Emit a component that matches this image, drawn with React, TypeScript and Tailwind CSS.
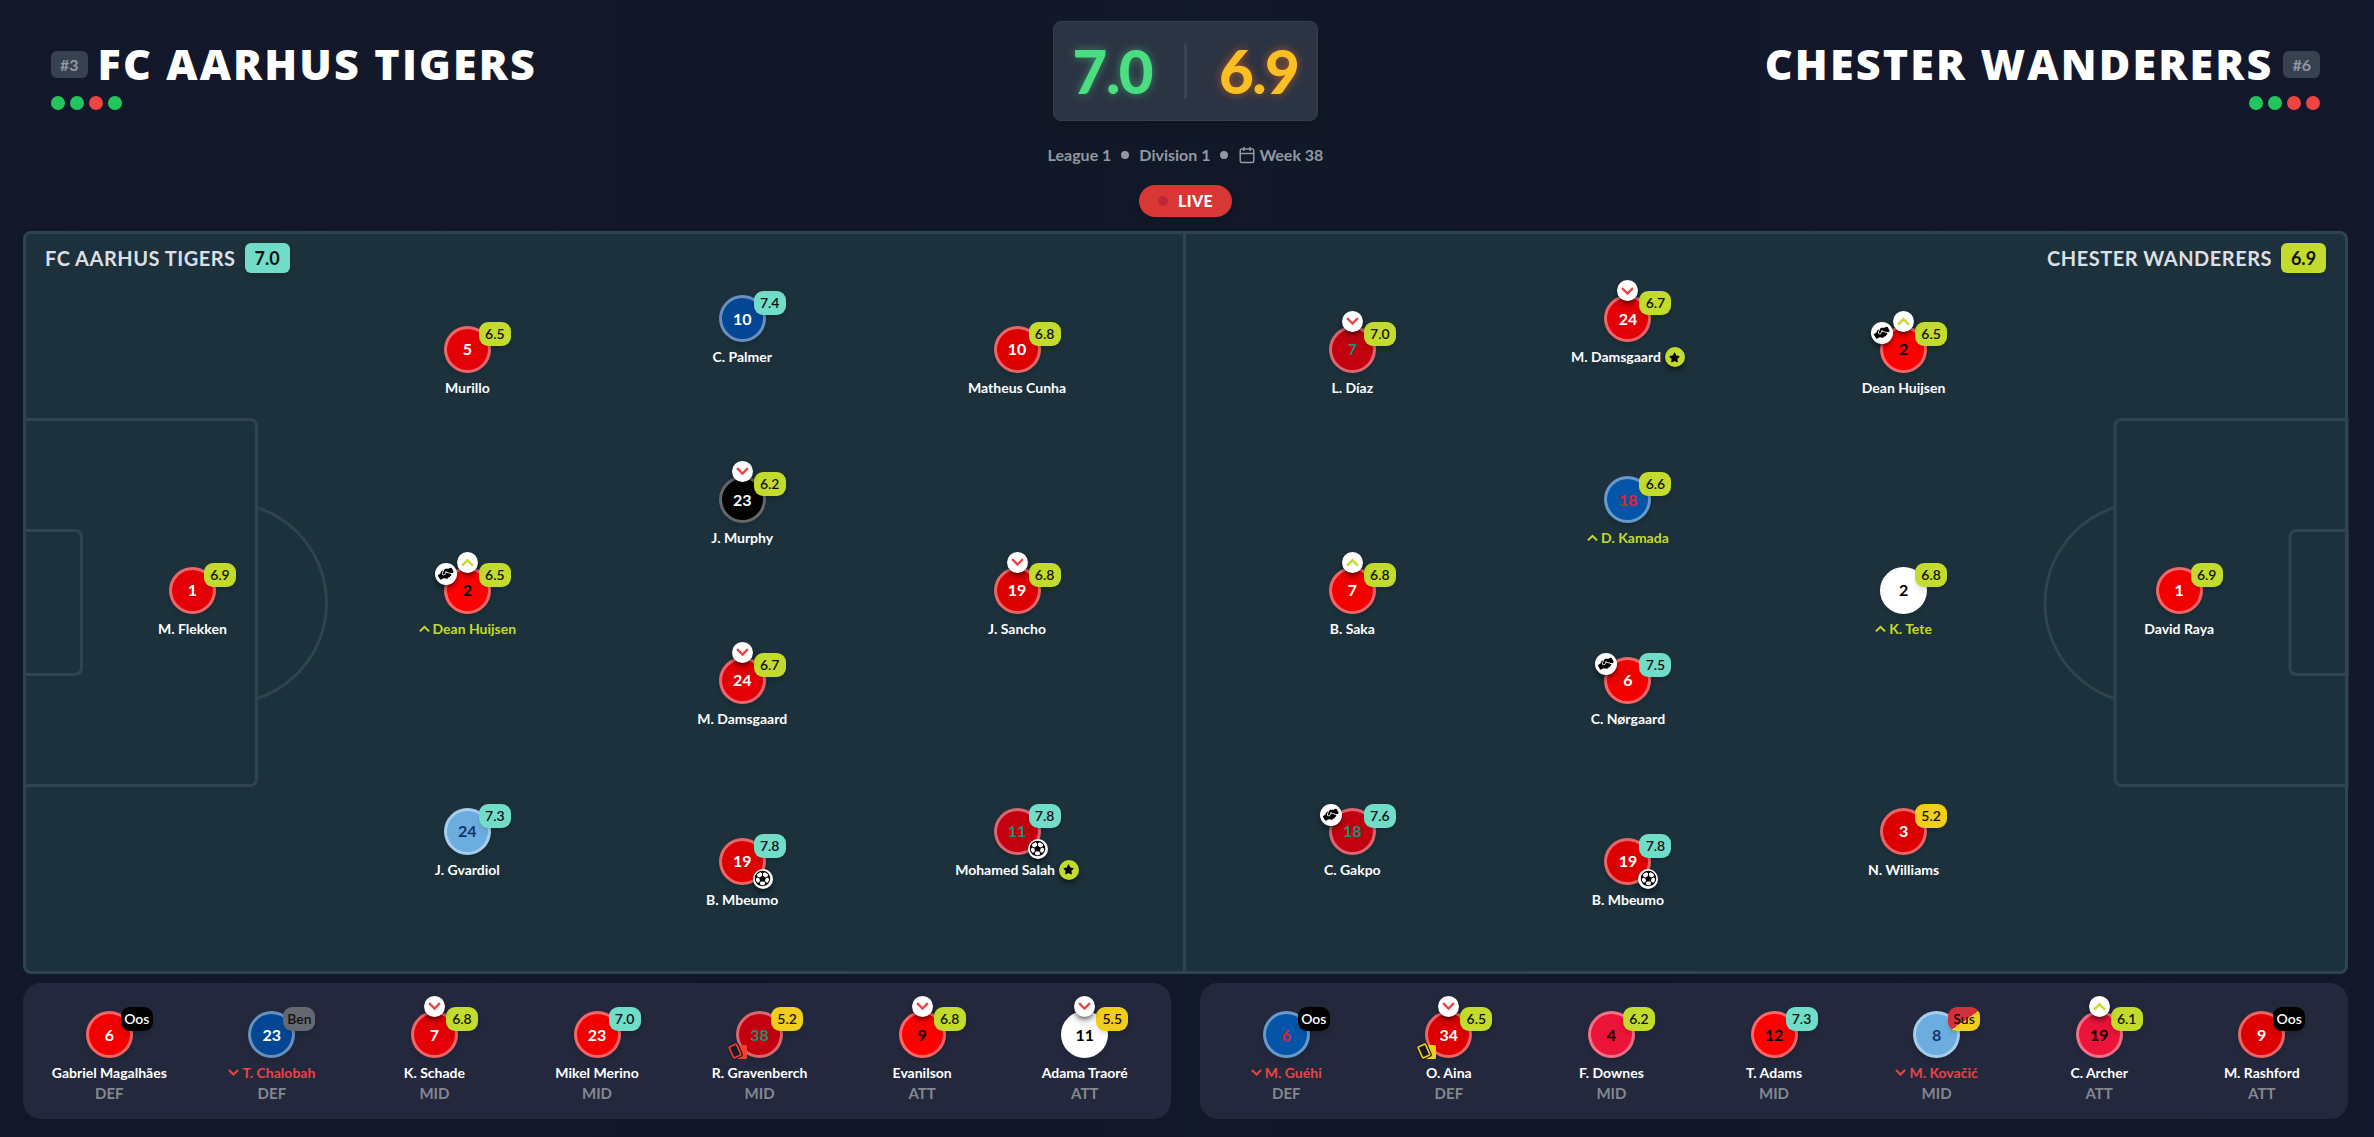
import { clsx } from "clsx";
import { Calendar } from "lucide-react";
import { FaHandshakeSimple, FaStar } from "react-icons/fa6";
import { IoIosFootball } from "react-icons/io";

type Trend = "up" | "down";
type Kit = "red" | "crimson" | "scarlet" | "forest" | "pure" | "lfc" | "cherry" | "chelsea" | "palace" | "city" | "black" | "white";

type Player = {
  name: string;
  number: number;
  kit: Kit;
  rating: string;
  tone?: "lime" | "teal" | "yellow" | "out" | "bench" | "suspended";
  badge?: Trend;
  label?: Trend;
  assist?: boolean;
  goal?: boolean;
  star?: boolean;
  card?: "yellow" | "red";
  position?: string;
};

const KITS: Record<Kit, string> = {
  red: "bg-[#e30006] text-white",
  crimson: "bg-[#dd0000] text-white",
  scarlet: "bg-[#f20000] text-white",
  forest: "bg-[#dd0000] text-white",
  pure: "bg-[#ff0000] text-black",
  lfc: "bg-[#c2000f] text-[#1f8f72]",
  cherry: "bg-[#eb1338] text-black",
  chelsea: "bg-[#034694] text-white",
  palace: "bg-[#0455a8] text-[#e5202e]",
  city: "bg-[#6caddf] text-[#14336b]",
  black: "bg-black text-white",
  white: "bg-white text-black",
};

const TONES = {
  lime: "bg-[#c3db2c] text-[#111]",
  teal: "bg-[#71dcc8] text-[#111]",
  yellow: "bg-[#f1cd1c] text-[#111]",
  out: "bg-black text-white",
  bench: "bg-[#656870] text-[#111]",
  suspended: "bg-[linear-gradient(145deg,#d2303a_54%,#f1cd1c_54%)] text-[#111]",
};

const HOME: Player[][] = [
  [{ name: "M. Flekken", number: 1, kit: "red", rating: "6.9" }],
  [
    { name: "Murillo", number: 5, kit: "red", rating: "6.5" },
    { name: "Dean Huijsen", number: 2, kit: "pure", rating: "6.5", badge: "up", label: "up", assist: true },
    { name: "J. Gvardiol", number: 24, kit: "city", rating: "7.3", tone: "teal" },
  ],
  [
    { name: "C. Palmer", number: 10, kit: "chelsea", rating: "7.4", tone: "teal" },
    { name: "J. Murphy", number: 23, kit: "black", rating: "6.2", badge: "down" },
    { name: "M. Damsgaard", number: 24, kit: "red", rating: "6.7", badge: "down" },
    { name: "B. Mbeumo", number: 19, kit: "crimson", rating: "7.8", tone: "teal", goal: true },
  ],
  [
    { name: "Matheus Cunha", number: 10, kit: "crimson", rating: "6.8" },
    { name: "J. Sancho", number: 19, kit: "crimson", rating: "6.8", badge: "down" },
    { name: "Mohamed Salah", number: 11, kit: "lfc", rating: "7.8", tone: "teal", goal: true, star: true },
  ],
];

const AWAY: Player[][] = [
  [
    { name: "L. Díaz", number: 7, kit: "lfc", rating: "7.0", badge: "down" },
    { name: "B. Saka", number: 7, kit: "scarlet", rating: "6.8", badge: "up" },
    { name: "C. Gakpo", number: 18, kit: "lfc", rating: "7.6", tone: "teal", assist: true },
  ],
  [
    { name: "M. Damsgaard", number: 24, kit: "red", rating: "6.7", badge: "down", star: true },
    { name: "D. Kamada", number: 18, kit: "palace", rating: "6.6", label: "up" },
    { name: "C. Nørgaard", number: 6, kit: "scarlet", rating: "7.5", tone: "teal", assist: true },
    { name: "B. Mbeumo", number: 19, kit: "crimson", rating: "7.8", tone: "teal", goal: true },
  ],
  [
    { name: "Dean Huijsen", number: 2, kit: "pure", rating: "6.5", badge: "up", assist: true },
    { name: "K. Tete", number: 2, kit: "white", rating: "6.8", label: "up" },
    { name: "N. Williams", number: 3, kit: "forest", rating: "5.2", tone: "yellow" },
  ],
  [{ name: "David Raya", number: 1, kit: "scarlet", rating: "6.9" }],
];

const HOME_BENCH: Player[] = [
  { name: "Gabriel Magalhães", number: 6, kit: "scarlet", rating: "Oos", tone: "out", position: "DEF" },
  { name: "T. Chalobah", number: 23, kit: "chelsea", rating: "Ben", tone: "bench", label: "down", position: "DEF" },
  { name: "K. Schade", number: 7, kit: "red", rating: "6.8", badge: "down", position: "MID" },
  { name: "Mikel Merino", number: 23, kit: "scarlet", rating: "7.0", tone: "teal", position: "MID" },
  { name: "R. Gravenberch", number: 38, kit: "lfc", rating: "5.2", tone: "yellow", card: "red", position: "MID" },
  { name: "Evanilson", number: 9, kit: "pure", rating: "6.8", badge: "down", position: "ATT" },
  { name: "Adama Traoré", number: 11, kit: "white", rating: "5.5", tone: "yellow", badge: "down", position: "ATT" },
];

const AWAY_BENCH: Player[] = [
  { name: "M. Guéhi", number: 6, kit: "palace", rating: "Oos", tone: "out", label: "down", position: "DEF" },
  { name: "O. Aina", number: 34, kit: "forest", rating: "6.5", badge: "down", card: "yellow", position: "DEF" },
  { name: "F. Downes", number: 4, kit: "cherry", rating: "6.2", position: "MID" },
  { name: "T. Adams", number: 12, kit: "pure", rating: "7.3", tone: "teal", position: "MID" },
  { name: "M. Kovačić", number: 8, kit: "city", rating: "Sus", tone: "suspended", label: "down", position: "MID" },
  { name: "C. Archer", number: 19, kit: "cherry", rating: "6.1", badge: "up", position: "ATT" },
  { name: "M. Rashford", number: 9, kit: "crimson", rating: "Oos", tone: "out", position: "ATT" },
];

export default function App() {
  return (
    <div className="flex min-h-screen flex-col bg-[linear-gradient(to_right,#13172b,#111827_50%,#13172b)] pt-[21px] pr-[26px] pb-[18px] pl-[23px] font-[Lato,sans-serif] text-white">
      <header className="grid grid-cols-[1fr_auto_1fr] px-7 pb-[14px]">
        <TeamHeader name="FC Aarhus Tigers" rank={3} form={["W", "W", "L", "W"]} />
        <div className="flex flex-col items-center">
          <div className="flex h-[100px] w-[265px] items-center justify-center gap-8 rounded-lg border border-[#313f4e] bg-[#2c3444] shadow-lg">
            <div className="text-6xl font-black tracking-tight text-[#4ade80] [text-shadow:0_0_10px_rgba(74,222,128,0.5)]">7.0</div>
            <div className="h-14 w-[3px] rounded-full bg-[#3b4453]" />
            <div className="text-6xl font-black tracking-tight text-[#fbbf24] [text-shadow:0_0_10px_rgba(249,115,22,0.6)]">6.9</div>
          </div>
          <div className="mt-[22px] flex h-6 items-center gap-[10px] text-base font-bold text-[#9298a3]">
            <span>League 1</span>
            <Dot />
            <span>Division 1</span>
            <Dot />
            <span className="flex items-center gap-[3px]">
              <Calendar size={18} strokeWidth={2} />
              Week 38
            </span>
          </div>
          <div className="mt-[18px] flex h-8 items-center gap-[10px] rounded-full bg-[#d93636] px-[19px] text-base font-black tracking-wide shadow-md">
            <span className="size-[10px] rounded-full bg-[#bf2438]" />
            LIVE
          </div>
        </div>
        <TeamHeader name="Chester Wanderers" rank={6} form={["W", "W", "L", "L"]} away />
      </header>

      <main className="grid min-h-[743px] flex-1 grid-cols-2 rounded-lg border-[3px] border-[#30444f] bg-[#1c313c]">
        <PitchHalf team="FC Aarhus Tigers" rating="7.0" lines={HOME} />
        <PitchHalf team="Chester Wanderers" rating="6.9" lines={AWAY} away />
      </main>

      <footer className="mt-[9px] grid grid-cols-2 gap-[29px]">
        <Bench players={HOME_BENCH} />
        <Bench players={AWAY_BENCH} />
      </footer>
    </div>
  );
}

function Dot() {
  return <span className="size-2 rounded-full bg-[#9298a3]" />;
}

function TeamHeader({ name, rank, form, away }: { name: string; rank: number; form: string[]; away?: boolean }) {
  return (
    <div className={clsx("flex flex-col gap-2 pt-[19px]", away && "items-end")}>
      <div className={clsx("flex items-center gap-[10px]", away && "flex-row-reverse")}>
        <span className="rounded-md bg-[#384150] px-[9px] text-base leading-[27px] font-bold text-[#9298a3]">#{rank}</span>
        <h1 className="font-['Open_Sans',sans-serif] text-[43px] leading-[48px] font-extrabold tracking-wider whitespace-nowrap uppercase">
          {name}
        </h1>
      </div>
      <div className="flex gap-[5px]">
        {form.map((result, i) => (
          <span key={i} className={clsx("size-[14px] rounded-full", result === "W" ? "bg-[#22c55e]" : "bg-[#ef4444]")} />
        ))}
      </div>
    </div>
  );
}

function PitchHalf({ team, rating, lines, away }: { team: string; rating: string; lines: Player[][]; away?: boolean }) {
  return (
    <section className={clsx("relative", !away && "border-r-[3px] border-[#30444f]")}>
      {/* Pitch markings */}
      <div className={clsx("absolute inset-0", away && "-scale-x-100")}>
        <div className="absolute top-1/4 -left-[3px] h-1/2 w-[235px] rounded-r-lg border-[3px] border-[#30444f]" />
        <div className="absolute top-[40%] -left-[3px] h-1/5 w-[60px] rounded-r-lg border-[3px] border-[#30444f]" />
        <div className="absolute inset-y-0 left-[232px] flex w-[70px] items-center justify-end overflow-hidden">
          <div className="size-[204px] shrink-0 rounded-full border-[3px] border-[#30444f]" />
        </div>
      </div>

      <div className={clsx("absolute top-[9px] flex items-center gap-[9px]", away ? "right-[19px]" : "left-[19px]")}>
        <h2 className="text-[20px] leading-[30px] font-bold tracking-wide text-[#dcdfe3] uppercase">{team}</h2>
        <span
          className={clsx(
            "w-[45px] rounded-md text-center text-lg leading-[30px] font-bold text-[#111] shadow-md",
            away ? "bg-[#c3db2c]" : "bg-[#71dcc8]",
          )}
        >
          {rating}
        </span>
      </div>

      <div className="flex h-full py-[7px] pr-7 pl-[29px]">
        {lines.map((line, i) => (
          <div key={i} className="flex flex-1 flex-col justify-around">
            {line.map((player) => (
              <PlayerMarker key={player.name} player={player} />
            ))}
          </div>
        ))}
      </div>
    </section>
  );
}

function Bench({ players }: { players: Player[] }) {
  return (
    <section className="flex rounded-[18px] bg-[#23283d] px-[5px] pt-7 pb-4">
      {players.map((player) => (
        <div key={player.name} className="flex-1">
          <PlayerMarker player={player} />
        </div>
      ))}
    </section>
  );
}

function PlayerMarker({ player: p }: { player: Player }) {
  return (
    <div className="flex flex-col items-center whitespace-nowrap">
      <div className={clsx("relative flex size-[47px] items-center justify-center rounded-full border-[3px] border-white/40 text-base font-bold shadow-md", KITS[p.kit])}>
        {p.number}
        <span className={clsx("absolute -top-[7px] left-8 w-8 rounded-[9px] text-center text-sm leading-6 font-semibold shadow-md", TONES[p.tone ?? "lime"])}>
          {p.rating}
        </span>
        {p.badge && (
          <span className="absolute -top-[18px] left-[10px] flex size-[21px] items-center justify-center rounded-full bg-white shadow-md shadow-black/50">
            <Chevron trend={p.badge} className={clsx("w-[13px]", p.badge === "up" ? "text-[#c3db2c]" : "text-[#ef4444]")} />
          </span>
        )}
        {p.assist && (
          <span className="absolute -top-[7px] -left-3 flex size-[22px] items-center justify-center rounded-full bg-white text-black shadow-md shadow-black/50">
            <FaHandshakeSimple size={16} className="-rotate-30" />
          </span>
        )}
        {p.goal && (
          <span className="absolute top-7 left-[31px] flex size-5 items-center justify-center rounded-full bg-white text-black shadow-md shadow-black/50">
            <IoIosFootball size={19} />
          </span>
        )}
        {p.card && <Cards className={clsx("absolute top-[29px] -left-[11px]", p.card === "red" ? "text-[#f4402f]" : "text-[#f1cd1c]")} />}
      </div>
      <div
        className={clsx(
          "mt-[5px] flex items-center text-sm leading-5 font-bold",
          p.star ? "gap-1" : "gap-[3px]",
          p.label === "up" && "text-[#c3db2c]",
          p.label === "down" && "text-[#e84545]",
        )}
      >
        {p.label && <Chevron trend={p.label} className="w-[11px]" />}
        {p.name}
        {p.star && (
          <span className="flex size-5 items-center justify-center rounded-full bg-[#c3db2c] text-black shadow-md shadow-black/50">
            <FaStar size={11} />
          </span>
        )}
      </div>
      {p.position && <div className="text-[15px] leading-5 font-bold text-[#83878f]">{p.position}</div>}
    </div>
  );
}

function Chevron({ trend, className }: { trend: Trend; className?: string }) {
  return (
    <svg viewBox="0 0 12 8" fill="none" stroke="currentColor" strokeWidth={2.2} className={clsx(className, trend === "up" && "rotate-180")}>
      <path d="M1 1l5 5 5-5" />
    </svg>
  );
}

function Cards({ className }: { className?: string }) {
  return (
    <svg width="20" height="17" viewBox="0 0 20 17" className={className}>
      <rect x="9" y="2" width="10" height="14" rx="1.5" fill="currentColor" />
      <rect x="3" y="2" width="8" height="12" rx="1" transform="rotate(-24 7 8)" fill="#161a2b" stroke="#161a2b" strokeWidth="4" />
      <rect x="3" y="2" width="8" height="12" rx="1" transform="rotate(-24 7 8)" fill="#161a2b" stroke="currentColor" strokeWidth="1.6" />
    </svg>
  );
}
